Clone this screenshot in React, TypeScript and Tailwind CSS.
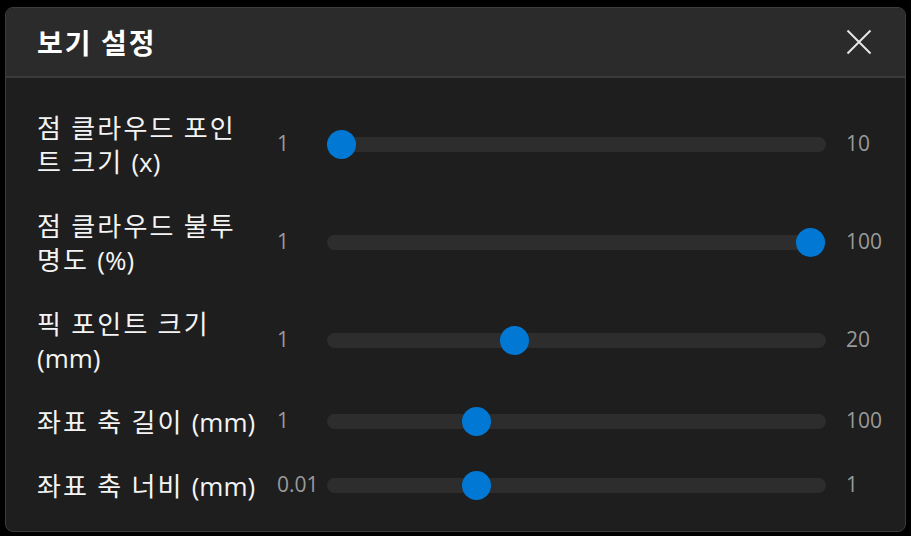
import React from 'react';

type Setting = {
  lines: string[];
  min: number;
  max: number;
  value: number;
  minLabel: string;
  maxLabel: string;
};

const settings: Setting[] = [
  { lines: ['점 클라우드 포인', '트 크기 (x)'], min: 1, max: 10, value: 1, minLabel: '1', maxLabel: '10' },
  { lines: ['점 클라우드 불투', '명도 (%)'], min: 1, max: 100, value: 100, minLabel: '1', maxLabel: '100' },
  { lines: ['픽 포인트 크기', '(mm)'], min: 1, max: 20, value: 8, minLabel: '1', maxLabel: '20' },
  { lines: ['좌표 축 길이 (mm)'], min: 1, max: 100, value: 29.5, minLabel: '1', maxLabel: '100' },
  { lines: ['좌표 축 너비 (mm)'], min: 0.01, max: 1, value: 0.295, minLabel: '0.01', maxLabel: '1' },
];

const korean = { fontFamily: '"Noto Sans CJK KR", "Noto Sans", sans-serif' };
const latin = { fontFamily: '"Open Sans", "Noto Sans", sans-serif' };

// Hangul gets extra tracking, the "(unit)" part is set in a latin face
const Label = ({ text }: { text: string }) => {
  const i = text.indexOf('(');
  if (i < 0) return <div className="h-[34px] whitespace-nowrap">{text}</div>;
  return (
    <div className="h-[34px] whitespace-nowrap">
      {text.slice(0, i)}
      <span className="tracking-normal leading-none" style={latin}>
        {text.slice(i)}
      </span>
    </div>
  );
};

const Slider = ({ min, max, value }: { min: number; max: number; value: number }) => {
  const pct = (value - min) / (max - min);
  return (
    <div className="relative flex-1 h-[29px] flex items-center">
      <div className="w-full h-[15px] rounded-full bg-[#2d2d2d]" />
      <div
        className="absolute top-0 w-[29px] h-[29px] rounded-full bg-[#0078d4]"
        style={{ left: `calc((100% - 30px) * ${pct})` }}
      />
    </div>
  );
};

const App = () => {
  return (
    <div className="w-[911px] h-[536px] bg-black pt-[7px] pl-[5px]">
      <div
        className="w-[901px] h-[525px] rounded-[8px] border border-[#3c3c3c] bg-[#1e1e1e] overflow-hidden flex flex-col"
        style={korean}
      >
        {/* Header */}
        <div className="h-[70px] shrink-0 bg-[#2b2b2b] border-b-2 border-[#3a3a3a] flex items-center justify-between pl-[31px] pr-[33px]">
          <h2 className="text-[28px] font-bold tracking-[2px] text-white leading-none">보기 설정</h2>
          <button className="w-[26px] h-[26px] flex items-center justify-center text-[#e6e6e6]">
            <svg width="26" height="26" viewBox="0 0 26 26" fill="none" stroke="currentColor" strokeWidth="2">
              <path d="M1.5 1.5 24.5 24.5M24.5 1.5 1.5 24.5" />
            </svg>
          </button>
        </div>

        {/* Body */}
        <div className="flex flex-col gap-[30px] pt-[32px] pl-[31px] pr-[19px]">
          {settings.map((s) => (
            <div key={s.lines[0]} className="flex items-center">
              <div className="w-[240px] text-[26px] leading-[34px] tracking-[2.2px] font-normal text-[#f4f4f4]">
                {s.lines.map((l) => (
                  <Label key={l} text={l} />
                ))}
              </div>
              <div className="w-[50px] text-[21px] text-[#9a9a9a]" style={latin}>
                {s.minLabel}
              </div>
              <Slider min={s.min} max={s.max} value={s.value} />
              <div className="w-[60px] pl-[20px] text-[21px] text-[#9a9a9a]" style={latin}>
                {s.maxLabel}
              </div>
            </div>
          ))}
        </div>
      </div>
    </div>
  );
};

export default App;
